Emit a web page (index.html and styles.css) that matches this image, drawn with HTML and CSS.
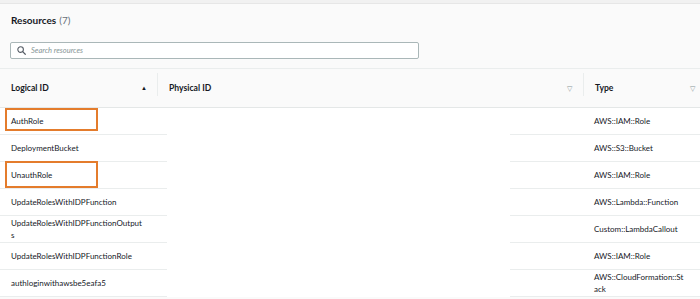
FILE: index.html
```html
<!DOCTYPE html>
<html>
<head>
<meta charset="utf-8">
<link rel="stylesheet" href="styles.css">
</head>
<body>
<div class="topstrip"></div>
<div class="panel">
  <div class="title"><span class="title-main">Resources</span> <span class="count">(7)</span></div>
  <div class="search">
    <svg class="search-icon" width="9" height="9" viewBox="0 0 10 10"><circle cx="4" cy="4" r="3.1" fill="none" stroke="#545b64" stroke-width="1.2"/><line x1="6.3" y1="6.3" x2="9.2" y2="9.2" stroke="#545b64" stroke-width="1.3" stroke-linecap="round"/></svg>
    <span class="placeholder">Search resources</span>
  </div>
  <div class="table">
    <div class="row head">
      <div class="cell hcell">Logical ID<span class="sort-up">▲</span></div>
      <div class="cell hcell divided">Physical ID<span class="sort-dn">▽</span></div>
      <div class="cell hcell divided">Type<span class="sort-dn">▽</span></div>
    </div>
    <div class="body">
      <div class="row"><div class="cell c1">AuthRole<span class="mark mark-a"></span></div><div class="cell"></div><div class="cell c3">AWS::IAM::Role</div></div>
      <div class="row"><div class="cell c1">DeploymentBucket</div><div class="cell"></div><div class="cell c3">AWS::S3::Bucket</div></div>
      <div class="row"><div class="cell c1">UnauthRole<span class="mark mark-b"></span></div><div class="cell"></div><div class="cell c3">AWS::IAM::Role</div></div>
      <div class="row"><div class="cell c1">UpdateRolesWithIDPFunction</div><div class="cell"></div><div class="cell c3">AWS::Lambda::Function</div></div>
      <div class="row"><div class="cell c1">UpdateRolesWithIDPFunctionOutputs</div><div class="cell"></div><div class="cell c3">Custom::LambdaCallout</div></div>
      <div class="row"><div class="cell c1">UpdateRolesWithIDPFunctionRole</div><div class="cell"></div><div class="cell c3">AWS::IAM::Role</div></div>
      <div class="row"><div class="cell c1">authloginwithawsbe5eafa5</div><div class="cell"></div><div class="cell c3">AWS::CloudFormation::Stack</div></div>
      <div class="redact"></div>
    </div>
  </div>
</div>
</body>
</html>
```

FILE: styles.css
```css
html, body {
  margin: 0;
  padding: 0;
  background: #fafafa;
  font-family: Lato, "Open Sans", "Liberation Sans", sans-serif;
  color: #16191f;
}
html {
  height: 299px;
  overflow: hidden;
}
.topstrip {
  height: 3px;
  background: #f1f1f1;
  border-bottom: 1px solid #e6e6e6;
}
.panel {
  background: #fafafa;
}
.title {
  height: 31px;
  padding-left: 11px;
  display: flex;
  align-items: center;
  font-size: 10px;
  gap: 3px;
}
.title-main { font-weight: 700; color: #16191f; }
.count { color: #687078; }
.search {
  margin: 7px 0 0 10px;
  width: 401px;
  height: 15px;
  border: 1px solid #aab7b8;
  border-radius: 2px;
  background: #fff;
  display: flex;
  align-items: center;
  gap: 5px;
  padding-left: 6px;
}
.search-icon { flex: none; }
.placeholder {
  font-style: italic;
  font-size: 7.5px;
  color: #879596;
}
.table {
  margin-top: 9px;
  border-top: 1px solid #eaeded;
}
.row {
  display: grid;
  grid-template-columns: 157px 426px 125px;
  min-height: 26px;
  border-bottom: 1px solid #eaeded;
  background: #fff;
}
.row.head {
  background: #fafafa;
  height: 38px;
  border-bottom: 1px solid #e4e7e7;
}
.cell {
  display: flex;
  align-items: center;
  padding: 0 12px 0 11px;
  font-size: 8px;
  line-height: 12px;
  color: #16191f;
  position: relative;
  overflow-wrap: anywhere;
  min-width: 0;
}
.c1 { padding-right: 13px; }
.c3 { padding-right: 22px; }
.hcell {
  font-weight: 700;
  font-size: 8.6px;
  justify-content: space-between;
  padding-right: 10px;
}
.divided::before {
  content: "";
  position: absolute;
  left: 0;
  top: 4px;
  bottom: 11px;
  border-left: 1px solid #eaeded;
}
.sort-up {
  font-size: 6px;
  color: #16191f;
}
.sort-dn {
  font-size: 7px;
  color: #879596;
  font-weight: 400;
}
.row.head .cell:nth-child(2) { padding-left: 12px; padding-right: 11px; }
.row.head .cell:nth-child(3) { padding-left: 12px; padding-right: 13px; }
.body {
  position: relative;
}
.redact {
  position: absolute;
  left: 167px;
  width: 343px;
  top: 0;
  bottom: 0;
  background: #fff;
}
.mark {
  position: absolute;
  left: 5px;
  width: 89px;
  border: 2px solid #e47c2c;
}
.mark-a { top: 0; height: 19px; }
.mark-b { top: -1px; height: 23px; }
```
